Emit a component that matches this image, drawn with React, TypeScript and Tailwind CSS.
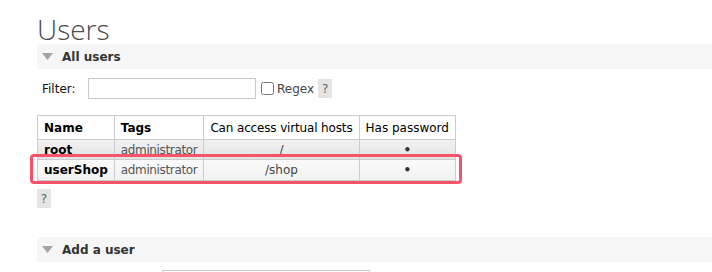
import React from "react";

const users = [
  { name: "root", tags: "administrator", vhosts: "/", row: "h-[20px] bg-gradient-to-b from-[#f2f2f2] to-[#e2e2e2]" },
  { name: "userShop", tags: "administrator", vhosts: "/shop", row: "h-[21px] bg-gradient-to-b from-[#fafafa] to-[#f1f1f1]" },
];

function Triangle() {
  return (
    <svg width="11" height="7" viewBox="0 0 11 7" className="shrink-0">
      <polygon points="0,0 11,0 5.5,7" fill="#a3a3a3" />
    </svg>
  );
}

function SectionBar({ title }: { title: string }) {
  return (
    <div className="flex h-[25px] items-center gap-[9px] bg-[#f6f6f6] pl-[5px]">
      <Triangle />
      <span className="text-[12px] font-bold text-[#333]">{title}</span>
    </div>
  );
}

function HelpBox() {
  return (
    <span className="flex h-[19px] w-[14px] items-center justify-center bg-[#e4e4e4] text-[12px] text-[#666]">
      ?
    </span>
  );
}

export default function App() {
  return (
    <main className="h-[272px] overflow-hidden bg-white pl-[37px] font-['DejaVu_Sans',Verdana,sans-serif] text-[12px] text-[#222]">
      <h1 className="pt-[14px] font-['Open_Sans',sans-serif] text-[28px] font-light leading-[30px] text-[#4a4a4a]">
        Users
      </h1>

      <SectionBar title="All users" />

      <div className="mt-[9px] flex h-[21px] items-center pl-[5px]">
        <span className="w-[46px] text-[#111]">Filter:</span>
        <input className="h-[21px] w-[168px] border border-[#c8c8c8] bg-white" />
        <input type="checkbox" className="ml-[5px] h-[13px] w-[13px]" />
        <span className="ml-[3px] text-[#444]">Regex</span>
        <span className="ml-[4px]">
          <HelpBox />
        </span>
      </div>

      <div className="relative mt-[16px] w-fit">
        <table className="border-collapse whitespace-nowrap text-left">
          <thead>
            <tr className="h-[24px] bg-white">
              <th className="border border-[#cccccc] px-[6px] font-bold text-black">Name</th>
              <th className="border border-[#cccccc] px-[6px] font-bold text-black">Tags</th>
              <th className="border border-[#cccccc] px-[6px] font-normal tracking-[-0.15px] text-black">Can access virtual hosts</th>
              <th className="border border-[#cccccc] px-[6px] font-normal text-black">Has password</th>
            </tr>
          </thead>
          <tbody>
            {users.map((u) => (
              <tr key={u.name} className={u.row}>
                <td className="border border-[#cccccc] px-[6px] py-0 leading-[14px] font-bold text-black">{u.name}</td>
                <td className="border border-[#cccccc] px-[6px] py-0 leading-[14px] tracking-[-0.35px] text-[#555]">{u.tags}</td>
                <td className="border border-[#cccccc] px-[6px] py-0 text-center leading-[14px] text-[#444]">{u.vhosts}</td>
                <td className="border border-[#cccccc] px-[6px] py-0 text-center leading-[14px] font-bold text-[#333]">•</td>
              </tr>
            ))}
          </tbody>
        </table>
        <div className="pointer-events-none absolute -left-[7px] -right-[6px] top-[39px] h-[30px] rounded-[4px] border-[3px] border-[#f5536a]" />
      </div>

      <div className="mt-[8px] flex">
        <HelpBox />
      </div>

      <div className="mt-[29px]">
        <SectionBar title="Add a user" />
      </div>

      <div className="ml-[125px] mt-[8px] h-[10px] w-[208px] border border-[#c8c8c8]" />
    </main>
  );
}
